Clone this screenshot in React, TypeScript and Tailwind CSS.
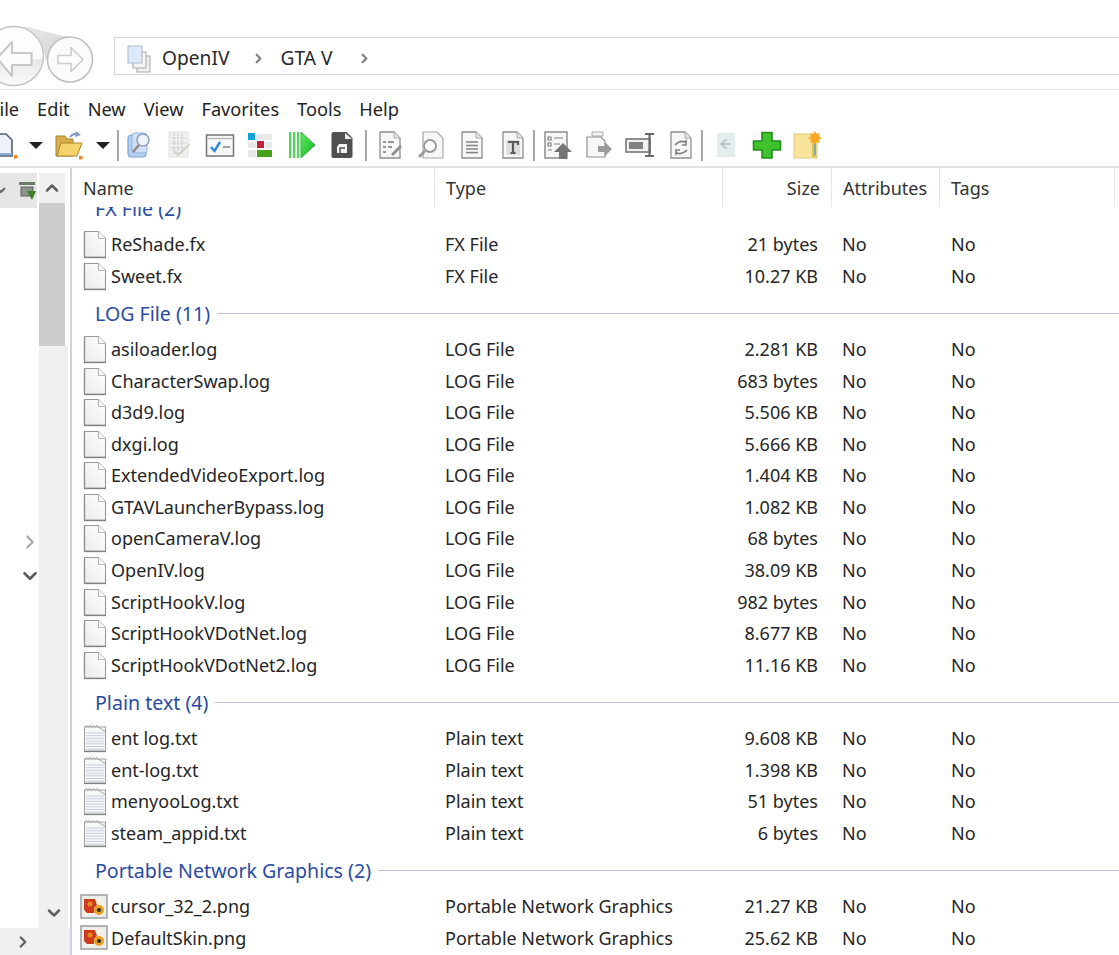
import { ChevronDown, ChevronRight, ChevronUp } from "lucide-react";
import type { ReactNode } from "react";

const font = "font-['Noto_Sans',sans-serif]";

type FileRow = { name: string; type: string; size: string; icon: "page" | "text" | "png" };
type Group = { title: string; rows: FileRow[]; hideLine?: boolean };

const log = (name: string, size: string): FileRow => ({ name, type: "LOG File", size, icon: "page" });
const txt = (name: string, size: string): FileRow => ({ name, type: "Plain text", size, icon: "text" });

const groups: Group[] = [
  {
    title: "FX File (2)",
    hideLine: true,
    rows: [
      { name: "ReShade.fx", type: "FX File", size: "21 bytes", icon: "page" },
      { name: "Sweet.fx", type: "FX File", size: "10.27 KB", icon: "page" },
    ],
  },
  {
    title: "LOG File (11)",
    rows: [
      log("asiloader.log", "2.281 KB"),
      log("CharacterSwap.log", "683 bytes"),
      log("d3d9.log", "5.506 KB"),
      log("dxgi.log", "5.666 KB"),
      log("ExtendedVideoExport.log", "1.404 KB"),
      log("GTAVLauncherBypass.log", "1.082 KB"),
      log("openCameraV.log", "68 bytes"),
      log("OpenIV.log", "38.09 KB"),
      log("ScriptHookV.log", "982 bytes"),
      log("ScriptHookVDotNet.log", "8.677 KB"),
      log("ScriptHookVDotNet2.log", "11.16 KB"),
    ],
  },
  {
    title: "Plain text (4)",
    rows: [
      txt("ent log.txt", "9.608 KB"),
      txt("ent-log.txt", "1.398 KB"),
      txt("menyooLog.txt", "51 bytes"),
      txt("steam_appid.txt", "6 bytes"),
    ],
  },
  {
    title: "Portable Network Graphics (2)",
    rows: [
      { name: "cursor_32_2.png", type: "Portable Network Graphics", size: "21.27 KB", icon: "png" },
      { name: "DefaultSkin.png", type: "Portable Network Graphics", size: "25.62 KB", icon: "png" },
    ],
  },
];

function PageIcon() {
  return (
    <svg width="26" height="29" viewBox="0 0 26 29" className="shrink-0">
      <defs>
        <linearGradient id="pageFill" x1="1" y1="0" x2="0" y2="1">
          <stop offset="0" stopColor="#ffffff" />
          <stop offset="1" stopColor="#ebebeb" />
        </linearGradient>
      </defs>
      <path d="M2.5 1.5h14l7 7v19h-21z" fill="url(#pageFill)" stroke="#9a9a9a" strokeWidth="1.1" />
      <path d="M16.5 1.5v7h7" fill="#ffffff" stroke="#b4b4b4" />
      <path d="M2 27.4h22" stroke="#7f7f7f" strokeWidth="1.5" />
      <path d="M2.5 2v25" stroke="#8a8a8a" strokeWidth="1.2" />
    </svg>
  );
}

function TextIcon() {
  return (
    <svg width="26" height="29" viewBox="0 0 26 29" className="shrink-0">
      <path d="M2.5 3h21v24.5h-21z" fill="#f7f8fa" stroke="#a0a0a0" strokeWidth="1.1" />
      <path d="M2 27.4h22" stroke="#7f7f7f" strokeWidth="1.5" />
      <path d="M2.5 3q2-3 3.5 0q2-3 3.5 0q2-3 3.5 0q2-3 3.5 0l7 5" fill="none" stroke="#a4a4a4" />
      <path
        d="M4 9h18M4 11.7h18M4 14.4h18M4 17.1h18M4 19.8h18M4 22.5h18M4 25.2h18"
        stroke="#c4ccda"
        strokeWidth="1"
      />
    </svg>
  );
}

function PngIcon() {
  return (
    <svg width="28" height="26" viewBox="0 0 28 26" className="shrink-0">
      <rect x="1" y="1" width="26" height="23" fill="#ececec" stroke="#a4a4a4" strokeWidth="1.6" />
      <rect x="4" y="4" width="20" height="17" fill="#f4f2e4" />
      <path d="M4 5h11l2 6-3 3v5H7l-3-3z" fill="#cc3a1e" />
      <circle cx="10" cy="10" r="2.5" fill="#e88a20" />
      <circle cx="19" cy="16" r="5" fill="#e8a020" />
      <circle cx="19" cy="16" r="2" fill="#2a2a2a" />
    </svg>
  );
}

function rowIcon(kind: FileRow["icon"]) {
  if (kind === "text") return <TextIcon />;
  if (kind === "png") return <PngIcon />;
  return <PageIcon />;
}

function Row({ row }: { row: FileRow }) {
  return (
    <div className="grid h-[31.57px] grid-cols-[363px_288px_109px_108px_1fr] items-center text-[18px] text-[#262626]">
      <div className={`flex items-center gap-[3px] ${row.icon === "png" ? "pl-[8px]" : "pl-[10px]"}`}>
        {rowIcon(row.icon)}
        <span className="whitespace-nowrap">{row.name}</span>
      </div>
      <div className="whitespace-nowrap pl-[10px]">{row.type}</div>
      <div className="whitespace-nowrap pr-[14px] text-right">{row.size}</div>
      <div className="pl-[10px]">No</div>
      <div className="pl-[11px]">No</div>
    </div>
  );
}

function GroupBlock({ group }: { group: Group }) {
  return (
    <div>
      <div className="flex h-[41.8px] items-center gap-[7px] pl-[23px] pt-[2px] text-[19.6px] text-[#2b4ba3]">
        <span className="whitespace-nowrap">{group.title}</span>
        {!group.hideLine && <div className="h-px flex-1 bg-[#b4c0de]" />}
      </div>
      {group.rows.map((row) => (
        <Row key={row.name} row={row} />
      ))}
    </div>
  );
}

function NavButtons() {
  return (
    <svg width="100" height="89" viewBox="0 0 100 89" className="shrink-0">
      <defs>
        <linearGradient id="swoosh" x1="0" y1="0" x2="1" y2="0.6">
          <stop offset="0" stopColor="#efefef" />
          <stop offset="1" stopColor="#d4d4d4" />
        </linearGradient>
        <linearGradient id="bigFill" x1="0" y1="0" x2="0" y2="1">
          <stop offset="0" stopColor="#ffffff" />
          <stop offset="0.55" stopColor="#fbfbfb" />
          <stop offset="0.56" stopColor="#e9e9e9" />
          <stop offset="1" stopColor="#fafafa" />
        </linearGradient>
      </defs>
      <path d="M16 26C34 26 48 34 70 37C56 38 48 47 46 62C44 42 34 28 16 26z" fill="url(#swoosh)" />
      <circle cx="14" cy="56" r="29.5" fill="url(#bigFill)" stroke="#c6c6c6" strokeWidth="1.5" />
      <path
        d="M12 42L-3 58l15 18v-11h19.5V53H12z"
        fill="#fbfbfb"
        stroke="#c8c8c8"
        strokeWidth="2.2"
        strokeLinejoin="round"
      />
      <circle cx="70" cy="59.5" r="22.5" fill="#fbfbfb" stroke="#bfbfbf" strokeWidth="1.6" />
      <path
        d="M71 47.5l12 12-12 12v-8H58v-8h13z"
        fill="#fcfcfc"
        stroke="#cccccc"
        strokeWidth="1.6"
        strokeLinejoin="round"
      />
    </svg>
  );
}

function PagesIcon() {
  return (
    <svg width="26" height="30" viewBox="0 0 26 30" className="shrink-0">
      <rect x="11" y="12" width="13" height="16" fill="#f0f0f0" stroke="#a8a8a8" />
      <rect x="7" y="8" width="13" height="16" fill="#f4f4f4" stroke="#a8a8a8" />
      <rect x="2" y="2" width="14" height="17" fill="#dde8f8" stroke="#b0b8c8" />
    </svg>
  );
}

function Caret() {
  return (
    <svg width="14" height="7" viewBox="0 0 14 7">
      <path d="M0 0h14L7 7z" fill="#222222" />
    </svg>
  );
}

function Sheet({ children }: { children?: ReactNode }) {
  return (
    <svg width="26" height="30" viewBox="0 0 26 30">
      <path d="M3 2h14l6 6v20H3z" fill="#f7f7f7" stroke="#8e8e8e" strokeWidth="1.3" />
      <path d="M17 2v6h6" fill="#e6e6e6" stroke="#a8a8a8" />
      {children}
    </svg>
  );
}

function Tool({ children, w }: { children?: ReactNode; w: string }) {
  return <div className={`flex h-full shrink-0 items-center justify-center ${w}`}>{children}</div>;
}

function Sep({ className }: { className?: string }) {
  return <div className={`h-[31px] w-[2px] shrink-0 bg-[#a6a6a6] ${className ?? ""}`} />;
}

function Toolbar() {
  return (
    <div className="flex h-[38px] shrink-0 items-center pb-[4px]">
      <Tool w="w-[22px]">
        <svg width="22" height="30" viewBox="0 0 22 30">
          <path d="M-8 4h14l6 6v16H-8z" fill="#eef3fb" stroke="#4f5f74" strokeWidth="1.6" />
          <path d="M-8 24h20" stroke="#8eaed6" strokeWidth="2" />
          <rect x="14" y="25" width="3.5" height="3.5" fill="#f08a20" />
        </svg>
      </Tool>
      <Tool w="w-[28px]">
        <Caret />
      </Tool>
      <Tool w="w-[38px]">
        <svg width="30" height="30" viewBox="0 0 30 30">
          <path d="M2 6h9l2 3h6v17H2z" fill="#d9ad4a" stroke="#a68530" />
          <path d="M3 26L7 13h21l-5 13z" fill="#f6d26a" stroke="#ad8528" />
          <path d="M16 7q4-5 8-2" fill="none" stroke="#7f9cc0" strokeWidth="2" />
          <path d="M22 1l5 4-6 2z" fill="#7f9cc0" />
          <rect x="25" y="26" width="3.5" height="3.5" fill="#f08a20" />
        </svg>
      </Tool>
      <Tool w="w-[29px]">
        <Caret />
      </Tool>
      <Sep />
      <div className="w-px" />
      <Tool w="w-[40px]">
        <svg width="26" height="28" viewBox="0 0 26 28">
          <rect x="1" y="4" width="18" height="22" rx="3.5" fill="#b5cff0" stroke="#7fa4d4" strokeWidth="1.2" />
          <rect x="5" y="2" width="15" height="20" rx="3" fill="#cfe0f6" stroke="#90b2dd" />
          <circle cx="16" cy="9" r="6" fill="#edf3fa" stroke="#93a3b5" strokeWidth="1.6" />
          <path d="M12 14l-6 7" stroke="#94877a" strokeWidth="2.4" />
        </svg>
      </Tool>
      <Tool w="w-[40px]">
        <svg width="26" height="28" viewBox="0 0 26 28">
          <rect x="2" y="1" width="19" height="25" fill="#f0f0f0" stroke="#e2e2e2" />
          <path
            d="M7 3v21M11 3v21M15 3v21M4 7h16M4 12h16M4 17h16"
            stroke="#cccccc"
            strokeWidth="1.2"
            strokeDasharray="2 1"
          />
          <path d="M6 19l5 5 12-11" fill="none" stroke="#d0d4c8" strokeWidth="2" />
        </svg>
      </Tool>
      <Tool w="w-[40px]">
        <svg width="30" height="26" viewBox="0 0 30 26">
          <rect x="1.5" y="3" width="27" height="21" fill="#f8f8f8" stroke="#757575" strokeWidth="1.5" />
          <path d="M2 6.5h26" stroke="#b8b8b8" strokeWidth="1.5" />
          <path d="M6 15l3.5 4L15 10" fill="none" stroke="#3388dc" strokeWidth="2.4" />
          <path d="M18 15h7" stroke="#888888" strokeWidth="1.6" />
        </svg>
      </Tool>
      <Tool w="w-[40px]">
        <svg width="26" height="26" viewBox="0 0 26 26">
          <rect x="1" y="1" width="7" height="7" fill="#12a2dd" />
          <rect x="9" y="2" width="16" height="6" fill="#e8e8e8" />
          <rect x="1" y="10" width="8" height="6" fill="#e8e8e8" />
          <rect x="10" y="9" width="7" height="7" fill="#c4203a" />
          <rect x="18" y="10" width="7" height="6" fill="#e8e8e8" />
          <rect x="1" y="18" width="8" height="7" fill="#e8e8e8" />
          <rect x="10" y="18" width="15" height="7" fill="#46a11c" />
        </svg>
      </Tool>
      <Tool w="w-[44px]">
        <svg width="28" height="28" viewBox="0 0 28 28">
          <defs>
            <linearGradient id="playFill" x1="0" y1="0" x2="1" y2="1">
              <stop offset="0" stopColor="#5cec62" />
              <stop offset="1" stopColor="#12b01e" />
            </linearGradient>
          </defs>
          <path d="M1 1h2.4v26H1zM5 1h2.4v26H5zM9 1h2.4v26H9z" fill="#4fd858" />
          <path d="M13 1l14 13-14 13z" fill="url(#playFill)" stroke="#22a82a" strokeWidth="0.8" />
        </svg>
      </Tool>
      <Tool w="w-[36px]">
        <svg width="24" height="28" viewBox="0 0 24 28">
          <path d="M1.5 3q0-2 2-2h13l6 6v18q0 2-2 2h-17q-2 0-2-2z" fill="#505050" />
          <path d="M15 2v6h7z" fill="#ececec" />
          <path d="M9 13h8v9H7v-6l2-3z" fill="#f4f4f4" />
          <path d="M10 22v-5h5" stroke="#505050" strokeWidth="1.5" fill="none" />
        </svg>
      </Tool>
      <div className="w-[5px]" />
      <Sep />
      <div className="w-[2px]" />
      <Tool w="w-[41px]">
        <Sheet>
          <path d="M6 12h3M11 12h6M6 17h3M11 17h4M6 22h3" stroke="#777777" strokeWidth="1.6" />
          <path d="M14 24l9-9 2 2-9 9z" fill="#8f8f8f" />
        </Sheet>
      </Tool>
      <Tool w="w-[41px]">
        <svg width="28" height="30" viewBox="0 0 28 30">
          <path d="M6 2h14l6 6v20H6z" fill="#f7f7f7" stroke="#a8a8a8" strokeWidth="1.2" />
          <circle cx="13" cy="16" r="6" fill="#ffffff" stroke="#979797" strokeWidth="1.8" />
          <path d="M8 21l-6 6" stroke="#979797" strokeWidth="2.6" />
        </svg>
      </Tool>
      <Tool w="w-[41px]">
        <Sheet>
          <path d="M7 12h12M7 15.5h12M7 19h12M7 22.5h12" stroke="#808080" strokeWidth="1.3" />
        </Sheet>
      </Tool>
      <Tool w="w-[41px]">
        <Sheet>
          <rect x="6" y="10" width="14" height="15" fill="#dedede" />
          <path d="M8 12h10v3M13 12v11M10.5 23h5" fill="none" stroke="#5c5c5c" strokeWidth="2.2" />
        </Sheet>
      </Tool>
      <Sep />
      <div className="w-[2px]" />
      <Tool w="w-[41px]">
        <svg width="30" height="30" viewBox="0 0 30 30">
          <rect x="2" y="2" width="22" height="26" fill="#f6f6f6" stroke="#878787" strokeWidth="1.4" />
          <path d="M5 7h3v3H5zM5 13h3v3H5zM11 8h9M11 14h6M5 20h4" stroke="#808080" strokeWidth="1.2" fill="none" />
          <path d="M20 13l9 9h-5v7h-8v-7h-5z" fill="#757575" />
        </svg>
      </Tool>
      <Tool w="w-[41px]">
        <svg width="28" height="28" viewBox="0 0 28 28">
          <path d="M7 1h11v4H7z" fill="#f4f4f4" stroke="#a8a8a8" />
          <path d="M2 6h14l4 4v16H2z" fill="#f7f7f7" stroke="#919191" strokeWidth="1.2" />
          <path d="M13 15h7v-4l7 7-7 7v-4h-7z" fill="#9a9a9a" />
        </svg>
      </Tool>
      <Tool w="w-[41px]">
        <svg width="30" height="26" viewBox="0 0 30 26">
          <rect x="1" y="7" width="24" height="13" fill="#f2f2f2" stroke="#767676" strokeWidth="1.6" />
          <rect x="4" y="10" width="14" height="7" fill="#808080" />
          <path d="M20 2h9M20 24h9M24.5 2v22" stroke="#686868" strokeWidth="2.2" />
        </svg>
      </Tool>
      <Tool w="w-[41px]">
        <Sheet>
          <path d="M7 15q5-5 10-3l1-1v4h-4M19 20q-5 5-10 3l-1 1v-4h4" fill="none" stroke="#808080" strokeWidth="1.6" />
        </Sheet>
      </Tool>
      <Sep className="mr-[2px]" />
      <Tool w="w-[41px]">
        <svg width="24" height="28" viewBox="0 0 24 28">
          <rect x="3" y="2" width="18" height="22" fill="#e4eeee" />
          <path d="M13 8l-6 5 6 5M7 13h9" fill="none" stroke="#b0bcbc" strokeWidth="1.6" />
          <path d="M3 25h18" stroke="#e4e9e9" strokeWidth="2" />
        </svg>
      </Tool>
      <Tool w="w-[41px]">
        <svg width="30" height="28" viewBox="0 0 30 28">
          <path
            d="M10 1.5h10v8.5h8.5v9H20v8H10v-8H1.5v-9H10z"
            fill="#3fc22c"
            stroke="#1d8f1c"
            strokeWidth="1.6"
            strokeLinejoin="round"
          />
        </svg>
      </Tool>
      <Tool w="w-[41px]">
        <svg width="30" height="28" viewBox="0 0 30 28">
          <rect x="1" y="3" width="23" height="24" fill="#f8e39a" stroke="#e2c87e" />
          <rect x="19" y="8" width="4" height="18" fill="#dfc05e" />
          <path d="M22 11v13" stroke="#6aa4b8" strokeWidth="1.6" />
          <path
            d="M22 0l1.6 3 3.2-1-1 3.2 3 1.8-3 1.8 1 3.2-3.2-1L22 14l-1.6-3-3.2 1 1-3.2-3-1.8 3-1.8-1-3.2 3.2 1z"
            fill="#f6a623"
          />
        </svg>
      </Tool>
    </div>
  );
}

const menus = ["File", "Edit", "New", "View", "Favorites", "Tools", "Help"];
const headers = [
  { label: "Name", cls: "pl-[11px]" },
  { label: "Type", cls: "pl-[11px]" },
  { label: "Size", cls: "justify-end pr-[11px]" },
  { label: "Attributes", cls: "pl-[11px]" },
  { label: "Tags", cls: "pl-[11px]" },
];

export default function App() {
  return (
    <div className={`flex h-[955px] w-full flex-col overflow-hidden bg-white ${font}`}>
      <div className="flex h-[90px] shrink-0 items-start overflow-hidden border-b border-[#e3e3e3]">
        <NavButtons />
        <div className="-mr-[10px] ml-[14px] mt-[37px] flex h-[38px] flex-1 items-center border border-[#d4d4d4] pl-[11px] pt-[5px] text-[19.2px] text-[#2a2a2a]">
          <PagesIcon />
          <span className="ml-[10px]">OpenIV</span>
          <ChevronRight className="ml-[22px]" size={15} strokeWidth={3.5} color="#808080" />
          <span className="ml-[14px]">GTA V</span>
          <ChevronRight className="ml-[24px]" size={15} strokeWidth={3.5} color="#808080" />
        </div>
      </div>

      <div className="-ml-[10px] flex h-[38px] shrink-0 items-center gap-[18px] pt-[1px] text-[18.2px] text-[#222222]">
        {menus.map((m) => (
          <span key={m}>{m}</span>
        ))}
      </div>

      <Toolbar />

      <div className="flex min-h-0 flex-1 border-t-[2px] border-[#e4e4e4]">
        <div className="flex w-[72px] shrink-0 flex-col border-r-[2px] border-[#c6d4e6]">
          <div className="flex min-h-0 flex-1">
            <div className="w-[39px] shrink-0">
              <div className="mt-[5px] flex h-[35px] w-[37px] items-center justify-between bg-[#e6e6e6]">
                <svg width="6" height="8" viewBox="0 0 6 8">
                  <path d="M-2 2l3 3 4-4" fill="none" stroke="#666666" strokeWidth="2" />
                </svg>
                <svg width="18" height="22" viewBox="0 0 18 22">
                  <rect x="0" y="2" width="16" height="3" fill="#6e7a6a" />
                  <rect x="2" y="7" width="12" height="9" fill="#8a9488" stroke="#5a625a" />
                  <path d="M8 11h9l-4 9z" fill="#3f7f2c" />
                </svg>
              </div>
              <div className="-mr-[2px] mt-[323px] flex justify-end">
                <ChevronRight size={22} strokeWidth={2.4} color="#a8a8a8" />
              </div>
              <div className="-mr-[2px] mt-[12px] flex justify-end">
                <ChevronDown size={22} strokeWidth={2.8} color="#5c5c5c" />
              </div>
            </div>
            <div className="mt-[5px] flex w-[29px] shrink-0 flex-col">
              <div className="flex h-[30px] w-[26px] shrink-0 items-center justify-center bg-[#f0f0f0]">
                <ChevronUp size={20} strokeWidth={3} color="#5f5f5f" />
              </div>
              <div className="h-[143px] w-[26px] shrink-0 bg-[#cdcdcd]" />
              <div className="flex-1 bg-[#f0f0f0]" />
              <div className="flex h-[30px] shrink-0 items-center justify-center bg-[#f0f0f0]">
                <ChevronDown size={20} strokeWidth={3} color="#5f5f5f" />
              </div>
            </div>
          </div>
          <div className="flex h-[27px] shrink-0 items-center bg-[#f0f0f0] pl-[14px]">
            <ChevronRight size={18} strokeWidth={3} color="#5f5f5f" />
          </div>
        </div>

        <div className="flex min-w-0 flex-1 flex-col">
          <div className="grid h-[39px] shrink-0 grid-cols-[363px_288px_109px_108px_175px] text-[18px] text-[#333333]">
            {headers.map((h) => (
              <div key={h.label} className={`flex items-center border-r border-[#e6e6e6] pt-[1px] ${h.cls}`}>
                {h.label}
              </div>
            ))}
          </div>
          <div className="min-h-0 flex-1 overflow-hidden">
            <div className="-mt-[20px]">
              {groups.map((g) => (
                <GroupBlock key={g.title} group={g} />
              ))}
            </div>
          </div>
        </div>
      </div>
    </div>
  );
}
